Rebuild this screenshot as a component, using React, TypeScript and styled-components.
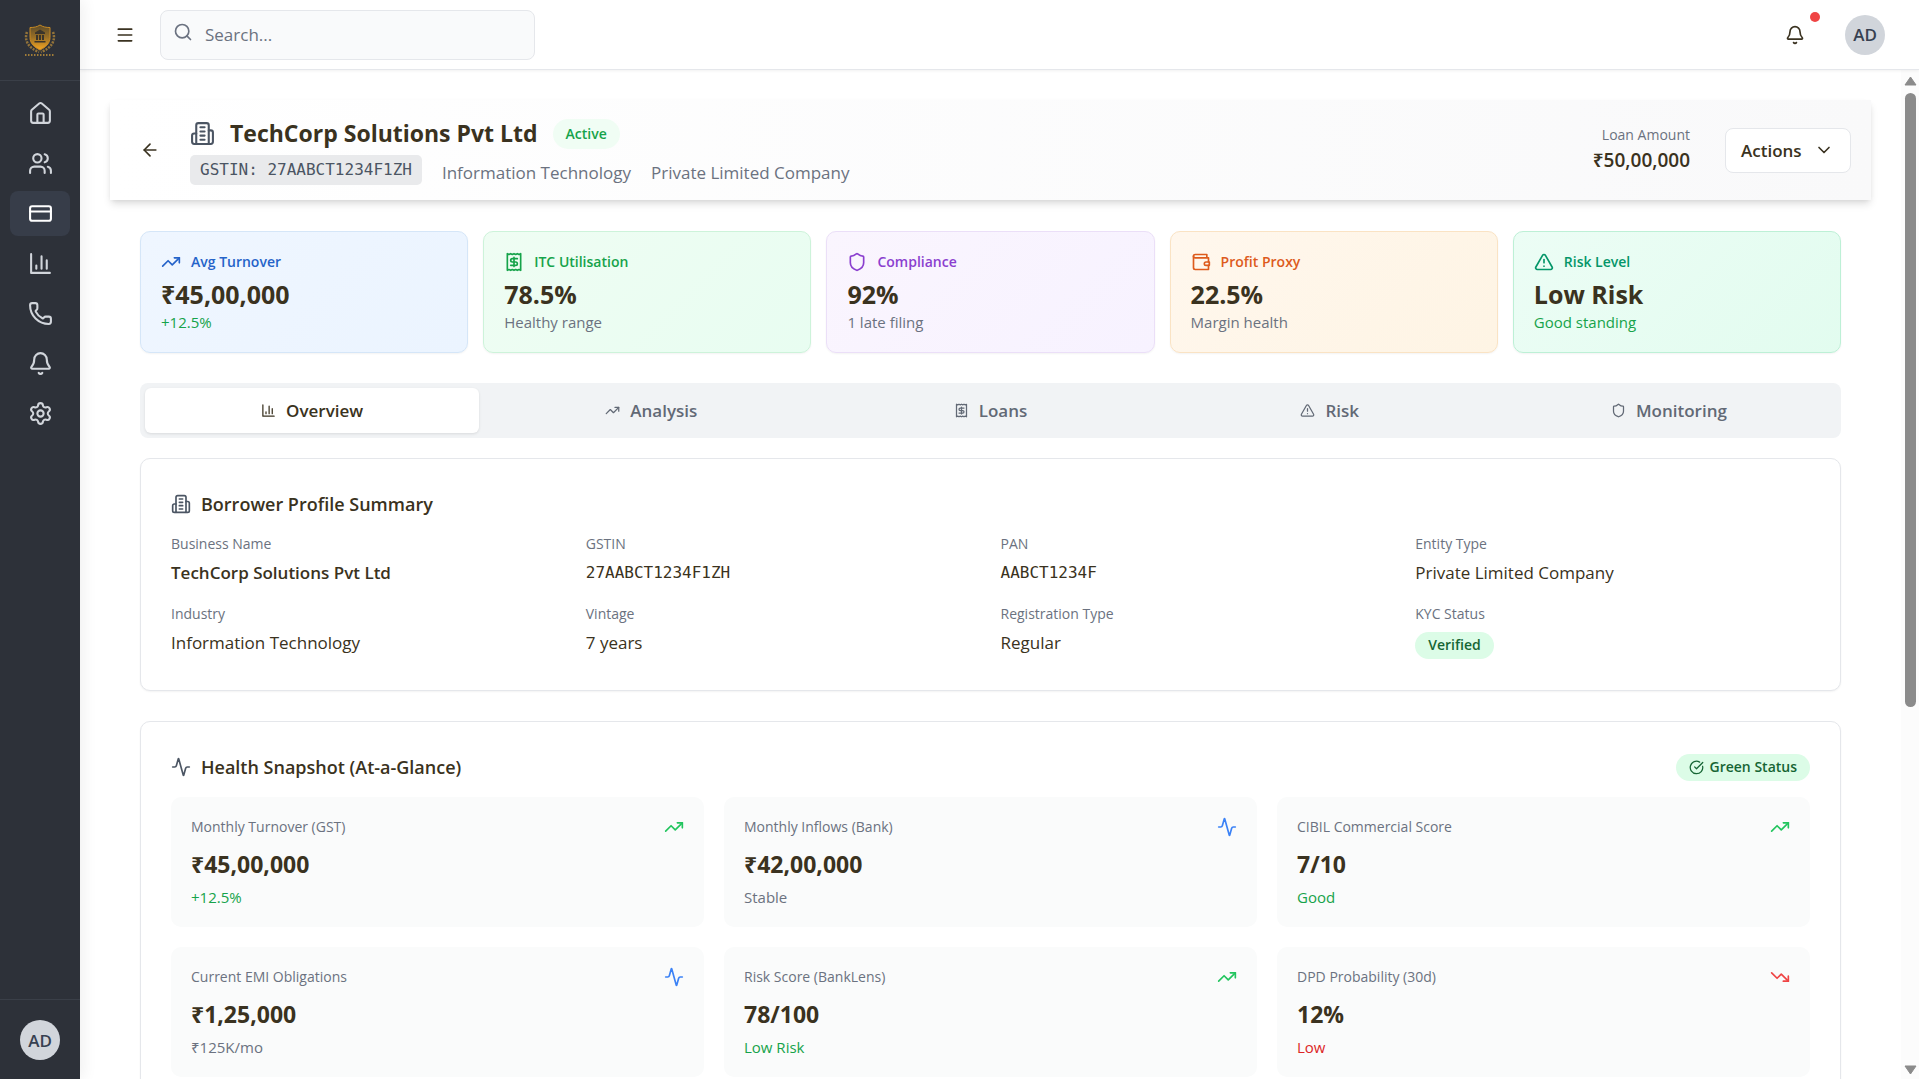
import React from "react";
import styled, { createGlobalStyle, css } from "styled-components";
import {
  Activity,
  ArrowLeft,
  Bell,
  ChevronDown,
  CircleCheckBig,
  CreditCard,
  House,
  Menu,
  Phone,
  Search,
  Settings,
  Shield,
  TrendingDown,
  TrendingUp,
  TriangleAlert,
  Users,
} from "lucide-react";

const ink = "#3a3220";
const muted = "#6b7280";
const line = "#e5e7eb";
const sans = `"Open Sans", "Noto Sans", sans-serif`;
const mono = `"DejaVu Sans Mono", "Liberation Mono", monospace`;

const GlobalStyle = createGlobalStyle`
  *, *::before, *::after { box-sizing: border-box; }
  body { margin: 0; background: #fff; color: ${ink}; font: 400 17px/25px ${sans}; }
  h1, h2, p, dl, dd, dt { margin: 0; }
  button, input { font: inherit; color: inherit; }
  button { cursor: pointer; }
  svg { display: block; flex: none; }
`;

type IconProps = { size?: number; strokeWidth?: number };

const Glyph = ({ size = 24, strokeWidth = 2, children }: IconProps & { children: React.ReactNode }) => (
  <svg
    width={size}
    height={size}
    viewBox="0 0 24 24"
    fill="none"
    stroke="currentColor"
    strokeWidth={strokeWidth}
    strokeLinecap="round"
    strokeLinejoin="round"
    aria-hidden="true"
  >
    {children}
  </svg>
);

const BarsIcon = (p: IconProps) => (
  <Glyph {...p}>
    <path d="M3 3v18h18M18 17V9M13 17V5M8 17v-3" />
  </Glyph>
);

const BuildingIcon = (p: IconProps) => (
  <Glyph {...p}>
    <path d="M6 22V4a2 2 0 0 1 2-2h8a2 2 0 0 1 2 2v18Z" />
    <path d="M6 12H4a2 2 0 0 0-2 2v6a2 2 0 0 0 2 2h2M18 9h2a2 2 0 0 1 2 2v9a2 2 0 0 1-2 2h-2" />
    <path d="M10 6h4M10 10h4M10 14h4M10 18h4" />
  </Glyph>
);

const ReceiptIcon = (p: IconProps) => (
  <Glyph {...p}>
    <path d="M4 2v20l2-1 2 1 2-1 2 1 2-1 2 1 2-1 2 1V2l-2 1-2-1-2 1-2-1-2 1-2-1-2 1Z" />
    <path d="M16 8h-6a2 2 0 1 0 0 4h4a2 2 0 1 1 0 4H8M12 17.5v-11" />
  </Glyph>
);

const WalletIcon = (p: IconProps) => (
  <Glyph {...p}>
    <path d="M21 12V7H5a2 2 0 0 1 0-4h14v4" />
    <path d="M3 5v14a2 2 0 0 0 2 2h16v-5" />
    <path d="M18 12a2 2 0 0 0 0 4h4v-4Z" />
  </Glyph>
);

const Crest = () => (
  <svg width="40" height="40" viewBox="0 0 40 40" aria-label="Company crest" role="img">
    <defs>
      <linearGradient id="crest" x1="0" y1="0" x2="0" y2="1">
        <stop offset="0" stopColor="#5a4a2a" />
        <stop offset="0.5" stopColor="#9a7026" />
        <stop offset="1" stopColor="#f5a623" />
      </linearGradient>
    </defs>
    <path d="M20 5c3 2 6 2.500 10 2.500v10c0 6-4 9.500-10 12.500-6-3-10-6.500-10-12.500v-10c4 0 7-.5 10-2.500Z" fill="url(#crest)" stroke="#c78a24" />
    <path d="M15 12.500 20 9.500l5 3v1.500H15ZM16 15h2v5h-2ZM19 15h2v5h-2ZM22 15h2v5h-2ZM14.500 21h11v1.500h-11Z" fill="#3b352b" />
    <path d="M7 12c-3 8 1 16 12 20M33 12c3 8-1 16-12 20" fill="none" stroke="#94743a" strokeWidth="2.500" strokeDasharray="2 1.200" />
    <path d="M5 35h30" stroke="#a07c38" strokeWidth="2" strokeDasharray="1.500 1.500" />
  </svg>
);

const Shell = styled.div`
  display: flex;
  height: 100vh;
  overflow: hidden;
`;

const Sidebar = styled.aside`
  position: relative;
  z-index: 2;
  display: flex;
  flex-direction: column;
  flex: none;
  width: 80px;
  background: #2d3139;
  box-shadow: 4px 0 14px rgba(0, 0, 0, 0.06);
`;

const Brand = styled.div`
  display: flex;
  align-items: center;
  justify-content: center;
  height: 81px;
  border-bottom: 1px solid #3a3f48;
`;

const Nav = styled.nav`
  display: flex;
  flex: 1;
  flex-direction: column;
  gap: 5px;
  padding: 10px;
`;

const NavLink = styled.a<{ $active?: boolean }>`
  display: flex;
  align-items: center;
  justify-content: center;
  height: 45px;
  border-radius: 8px;
  color: ${(p) => (p.$active ? "#ffffff" : "#d1d5db")};
  background: ${(p) => (p.$active ? "#373d49" : "transparent")};
`;

const SidebarFoot = styled.div`
  display: flex;
  justify-content: center;
  padding: 20px 0 19px;
  border-top: 1px solid #3a3f48;
`;

const Avatar = styled.button`
  width: 40px;
  height: 40px;
  padding: 0;
  border: 0;
  border-radius: 50%;
  background: #d1d5db;
  color: #374151;
  font-weight: 600;
`;

const Body = styled.div`
  display: flex;
  flex: 1;
  flex-direction: column;
  min-width: 0;
`;

const TopBar = styled.header`
  position: relative;
  z-index: 1;
  display: flex;
  align-items: center;
  flex: none;
  gap: 15px;
  height: 70px;
  padding: 0 34px 0 25px;
  border-bottom: 1px solid ${line};
  background: #fff;
  box-shadow: 0 1px 3px rgba(0, 0, 0, 0.06);
`;

const IconButton = styled.button`
  display: flex;
  align-items: center;
  justify-content: center;
  flex: none;
  width: 40px;
  height: 40px;
  padding: 0;
  border: 0;
  border-radius: 8px;
  background: transparent;
`;

const SearchBox = styled.label`
  display: flex;
  align-items: center;
  gap: 12px;
  width: 375px;
  height: 50px;
  padding: 0 12px;
  border: 1px solid ${line};
  border-radius: 8px;
  background: #f9fafb;
  color: ${muted};
`;

const SearchIcon = styled.span`
  padding-bottom: 6px;
`;

const SearchInput = styled.input`
  flex: 1;
  min-width: 0;
  padding: 0;
  border: 0;
  outline: 0;
  background: transparent;
  &::placeholder {
    color: ${muted};
    opacity: 1;
  }
`;

const TopActions = styled.div`
  display: flex;
  align-items: center;
  gap: 30px;
  margin-left: auto;
`;

const BellButton = styled(IconButton)`
  position: relative;
`;

const AlertDot = styled.span`
  position: absolute;
  top: -3px;
  right: -5px;
  width: 10px;
  height: 10px;
  border-radius: 50%;
  background: #ef4444;
`;

const Viewport = styled.div`
  display: flex;
  flex: 1;
  min-height: 0;
`;

const Main = styled.main`
  flex: 1;
  min-width: 0;
  overflow: hidden;
  padding: 30px;
`;

const ScrollTrack = styled.div`
  display: flex;
  flex: none;
  flex-direction: column;
  align-items: center;
  gap: 7px;
  width: 18px;
  padding: 6px 3px 4px;
  background: #fcfcfc;
`;

const ScrollLane = styled.div`
  flex: 1;
`;

const ScrollThumb = styled.div`
  width: 11px;
  height: calc(100% * 7 / 11);
  border-radius: 6px;
  background: #8b8b8b;
`;

const PageHead = styled.section`
  display: flex;
  align-items: center;
  height: 100px;
  padding: 0 20px;
  background: linear-gradient(90deg, #ffffff, #f9f9fa);
  box-shadow: 0 5px 8px -1px rgba(0, 0, 0, 0.12), 0 2px 5px -2px rgba(0, 0, 0, 0.1);
`;

const Identity = styled.div`
  display: flex;
  flex-direction: column;
  gap: 5px;
  margin-left: 20px;
  padding-top: 2px;
`;

const TitleRow = styled.div`
  display: flex;
  align-items: center;
  gap: 15px;
  height: 33px;
  color: #4b5563;
`;

const Title = styled.h1`
  color: ${ink};
  font-size: 23px;
  font-weight: 700;
  line-height: 33px;
`;

const MetaRow = styled.div`
  display: flex;
  align-items: flex-end;
  gap: 20px;
  color: ${muted};
`;

const Chip = styled.span`
  padding: 0 10px;
  border-radius: 5px;
  background: #e9eaec;
  color: #4b5563;
  font: 400 16px/30px ${mono};
`;

const Pill = styled.span<{ $soft?: boolean }>`
  display: inline-flex;
  align-items: center;
  gap: 6px;
  height: ${(p) => (p.$soft ? 30 : 27)}px;
  padding: 0 13px;
  border-radius: 15px;
  background: ${(p) => (p.$soft ? "#f0fdf4" : "#dcfce7")};
  color: ${(p) => (p.$soft ? "#16a34a" : "#166534")};
  font-size: 14px;
  font-weight: 600;
  line-height: 20px;
`;

const Loan = styled.div`
  margin-left: auto;
  text-align: right;
`;

const Label = styled.p`
  color: ${muted};
  font-size: 14px;
  line-height: 20px;
`;

const Note = styled.p<{ $color: string }>`
  color: ${(p) => p.$color};
  font-size: 15px;
  line-height: 20px;
`;

const LoanValue = styled.p`
  font-size: 19px;
  font-weight: 600;
  line-height: 30px;
`;

const ActionsButton = styled.button`
  display: flex;
  align-items: center;
  justify-content: space-between;
  width: 126px;
  height: 45px;
  margin-left: 35px;
  padding: 0 16px 0 15px;
  border: 1px solid ${line};
  border-radius: 8px;
  background: #fff;
  font-weight: 600;
`;

const Content = styled.div`
  display: flex;
  flex-direction: column;
  gap: 30px;
  padding: 31px 30px;
`;

const KpiGrid = styled.div`
  display: grid;
  grid-template-columns: repeat(5, 1fr);
  gap: 15px;
`;

const tones = {
  blue: css`
    background: linear-gradient(135deg, #eff6ff, #ebf4ff);
    border-color: #d5e6f8;
    --tone: #2563c9;
  `,
  green: css`
    background: linear-gradient(135deg, #effdf3, #e8fdf1);
    border-color: #cdf3da;
    --tone: #16a34a;
  `,
  purple: css`
    background: linear-gradient(135deg, #faf5fe, #f7f2ff);
    border-color: #ebdff8;
    --tone: #8b3fcf;
  `,
  orange: css`
    background: linear-gradient(135deg, #fff7ed, #fef4e4);
    border-color: #fae3c4;
    --tone: #dd5b1c;
  `,
  teal: css`
    background: linear-gradient(135deg, #ecfdf5, #e2fcef);
    border-color: #bdf0d6;
    --tone: #059669;
  `,
};

const KpiCard = styled.article<{ $tone: keyof typeof tones }>`
  padding: 20px;
  border: 1px solid;
  border-radius: 10px;
  box-shadow: 0 1px 2px rgba(0, 0, 0, 0.05);
  ${(p) => tones[p.$tone]}
`;

const KpiLabel = styled.h2`
  display: flex;
  align-items: center;
  gap: 10px;
  margin-bottom: 5px;
  color: var(--tone);
  font-size: 14px;
  font-weight: 600;
  line-height: 20px;
`;

const Figure = styled.p<{ $size: number }>`
  font-size: ${(p) => p.$size}px;
  font-weight: 700;
  line-height: 35px;
`;

const Panels = styled.div`
  display: flex;
  flex-direction: column;
  gap: 20px;
`;

const Tabs = styled.div`
  display: grid;
  grid-template-columns: repeat(5, 1fr);
  gap: 5px;
  padding: 5px;
  border-radius: 8px;
  background: #f1f3f5;
`;

const Tab = styled.button<{ $active: boolean }>`
  display: flex;
  align-items: center;
  justify-content: center;
  gap: 10px;
  height: 45px;
  padding: 0;
  border: 0;
  border-radius: 6px;
  background: ${(p) => (p.$active ? "#fff" : "transparent")};
  box-shadow: ${(p) => (p.$active ? "0 1px 3px rgba(0, 0, 0, 0.1)" : "none")};
  color: ${(p) => (p.$active ? ink : "#626975")};
  font-weight: 600;
`;

const Stack = styled.div`
  display: flex;
  flex-direction: column;
  gap: 30px;
`;

const Card = styled.section`
  padding: 30px;
  border: 1px solid ${line};
  border-radius: 10px;
  background: #fff;
  box-shadow: 0 1px 2px rgba(0, 0, 0, 0.05);
`;

const CardHead = styled.div`
  display: flex;
  align-items: center;
  gap: 10px;
  height: 30px;
  margin-bottom: 15px;
  color: #4b5563;
`;

const CardTitle = styled.h2`
  flex: 1;
  color: ${ink};
  font-size: 18px;
  font-weight: 600;
  line-height: 30px;
`;

const Fields = styled.dl`
  display: grid;
  grid-template-columns: repeat(4, 1fr);
  gap: 19px 20px;
`;

const FieldLabel = styled.dt`
  margin-bottom: 6px;
  color: ${muted};
  font-size: 14px;
  line-height: 20px;
`;

const FieldValue = styled.dd<{ $kind?: "strong" | "code" | "pill" }>`
  ${(p) => p.$kind === "strong" && "font-weight: 600;"}
  ${(p) => p.$kind === "code" && `font-family: ${mono}; font-size: 16px;`}
  ${(p) => p.$kind === "pill" && "display: flex; align-items: center; height: 30px;"}
`;

const Tiles = styled.div`
  display: grid;
  grid-template-columns: repeat(3, 1fr);
  gap: 20px;
`;

const Tile = styled.article`
  padding: 20px;
  border-radius: 10px;
  background: #fafbfb;
`;

const TileHead = styled.div<{ $icon: string }>`
  display: flex;
  justify-content: space-between;
  margin-bottom: 10px;
  svg {
    color: ${(p) => p.$icon};
  }
`;

const TileValue = styled(Figure)`
  margin-bottom: 5px;
`;

const green = "#16a34a";

const navItems = [
  { label: "Home", Icon: House },
  { label: "Borrowers", Icon: Users },
  { label: "Loans", Icon: CreditCard },
  { label: "Reports", Icon: BarsIcon },
  { label: "Calls", Icon: Phone },
  { label: "Alerts", Icon: Bell },
  { label: "Settings", Icon: Settings },
];

const kpis = [
  { tone: "blue", Icon: TrendingUp, label: "Avg Turnover", value: "₹45,00,000", note: "+12.5%", color: green },
  { tone: "green", Icon: ReceiptIcon, label: "ITC Utilisation", value: "78.5%", note: "Healthy range", color: muted },
  { tone: "purple", Icon: Shield, label: "Compliance", value: "92%", note: "1 late filing", color: muted },
  { tone: "orange", Icon: WalletIcon, label: "Profit Proxy", value: "22.5%", note: "Margin health", color: muted },
  { tone: "teal", Icon: TriangleAlert, label: "Risk Level", value: "Low Risk", note: "Good standing", color: green },
] as const;

const tabs = [
  { label: "Overview", Icon: BarsIcon },
  { label: "Analysis", Icon: TrendingUp },
  { label: "Loans", Icon: ReceiptIcon },
  { label: "Risk", Icon: TriangleAlert },
  { label: "Monitoring", Icon: Shield },
];

const fields: { label: string; value: string; kind?: "strong" | "code" | "pill" }[] = [
  { label: "Business Name", value: "TechCorp Solutions Pvt Ltd", kind: "strong" },
  { label: "GSTIN", value: "27AABCT1234F1ZH", kind: "code" },
  { label: "PAN", value: "AABCT1234F", kind: "code" },
  { label: "Entity Type", value: "Private Limited Company" },
  { label: "Industry", value: "Information Technology" },
  { label: "Vintage", value: "7 years" },
  { label: "Registration Type", value: "Regular" },
  { label: "KYC Status", value: "Verified", kind: "pill" },
];

const up = { Icon: TrendingUp, tint: "#22c55e" };
const flat = { Icon: Activity, tint: "#3b82f6" };
const down = { Icon: TrendingDown, tint: "#ef4444" };

const tiles = [
  { label: "Monthly Turnover (GST)", value: "₹45,00,000", note: "+12.5%", color: green, trend: up },
  { label: "Monthly Inflows (Bank)", value: "₹42,00,000", note: "Stable", color: muted, trend: flat },
  { label: "CIBIL Commercial Score", value: "7/10", note: "Good", color: green, trend: up },
  { label: "Current EMI Obligations", value: "₹1,25,000", note: "₹125K/mo", color: muted, trend: flat },
  { label: "Risk Score (BankLens)", value: "78/100", note: "Low Risk", color: green, trend: up },
  { label: "DPD Probability (30d)", value: "12%", note: "Low", color: "#dc2626", trend: down },
];

export default function App() {
  const [tab, setTab] = React.useState("Overview");
  return (
    <Shell>
      <GlobalStyle />
      <Sidebar>
        <Brand>
          <Crest />
        </Brand>
        <Nav aria-label="Primary">
          {navItems.map(({ label, Icon }) => (
            <NavLink key={label} href="#" aria-label={label} $active={label === "Loans"}>
              <Icon size={25} strokeWidth={2} />
            </NavLink>
          ))}
        </Nav>
        <SidebarFoot>
          <Avatar>AD</Avatar>
        </SidebarFoot>
      </Sidebar>
      <Body>
        <TopBar>
          <IconButton aria-label="Toggle menu">
            <Menu size={20} />
          </IconButton>
          <SearchBox>
            <SearchIcon>
              <Search size={20} />
            </SearchIcon>
            <SearchInput type="text" placeholder="Search..." aria-label="Search" />
          </SearchBox>
          <TopActions>
            <BellButton aria-label="Notifications">
              <Bell size={20} />
              <AlertDot />
            </BellButton>
            <Avatar>AD</Avatar>
          </TopActions>
        </TopBar>
        <Viewport>
          <Main>
            <PageHead>
              <IconButton aria-label="Back">
                <ArrowLeft size={20} />
              </IconButton>
              <Identity>
                <TitleRow>
                  <BuildingIcon size={25} />
                  <Title>TechCorp Solutions Pvt Ltd</Title>
                  <Pill $soft>Active</Pill>
                </TitleRow>
                <MetaRow>
                  <Chip>GSTIN: 27AABCT1234F1ZH</Chip>
                  <span>Information Technology</span>
                  <span>Private Limited Company</span>
                </MetaRow>
              </Identity>
              <Loan>
                <Label>Loan Amount</Label>
                <LoanValue>₹50,00,000</LoanValue>
              </Loan>
              <ActionsButton>
                Actions
                <ChevronDown size={20} />
              </ActionsButton>
            </PageHead>
            <Content>
              <KpiGrid>
                {kpis.map(({ tone, Icon, label, value, note, color }) => (
                  <KpiCard key={label} $tone={tone}>
                    <KpiLabel>
                      <Icon size={20} />
                      {label}
                    </KpiLabel>
                    <Figure $size={25}>{value}</Figure>
                    <Note $color={color}>{note}</Note>
                  </KpiCard>
                ))}
              </KpiGrid>
              <Panels>
                <Tabs role="tablist">
                  {tabs.map(({ label, Icon }) => (
                    <Tab
                      key={label}
                      role="tab"
                      aria-selected={tab === label}
                      $active={tab === label}
                      onClick={() => setTab(label)}
                    >
                      <Icon size={15} />
                      {label}
                    </Tab>
                  ))}
                </Tabs>
                <Stack>
                  <Card>
                    <CardHead>
                      <BuildingIcon size={20} />
                      <CardTitle>Borrower Profile Summary</CardTitle>
                    </CardHead>
                    <Fields>
                      {fields.map(({ label, value, kind }) => (
                        <div key={label}>
                          <FieldLabel>{label}</FieldLabel>
                          <FieldValue $kind={kind}>{kind === "pill" ? <Pill>{value}</Pill> : value}</FieldValue>
                        </div>
                      ))}
                    </Fields>
                  </Card>
                  <Card>
                    <CardHead>
                      <Activity size={20} />
                      <CardTitle>Health Snapshot (At-a-Glance)</CardTitle>
                      <Pill>
                        <CircleCheckBig size={15} />
                        Green Status
                      </Pill>
                    </CardHead>
                    <Tiles>
                      {tiles.map(({ label, value, note, color, trend }) => (
                        <Tile key={label}>
                          <TileHead $icon={trend.tint}>
                            <Label>{label}</Label>
                            <trend.Icon size={20} />
                          </TileHead>
                          <TileValue $size={23}>{value}</TileValue>
                          <Note $color={color}>{note}</Note>
                        </Tile>
                      ))}
                    </Tiles>
                  </Card>
                </Stack>
              </Panels>
            </Content>
          </Main>
          <ScrollTrack aria-hidden="true">
            <svg width="13" height="10" viewBox="0 0 13 10">
              <path d="M6.500 1 12 9H1Z" fill="#8b8b8b" stroke="#8b8b8b" strokeLinejoin="round" />
            </svg>
            <ScrollLane>
              <ScrollThumb />
            </ScrollLane>
            <svg width="13" height="10" viewBox="0 0 13 10">
              <path d="M6.500 9 12 1H1Z" fill="#8b8b8b" stroke="#8b8b8b" strokeLinejoin="round" />
            </svg>
          </ScrollTrack>
        </Viewport>
      </Body>
    </Shell>
  );
}
